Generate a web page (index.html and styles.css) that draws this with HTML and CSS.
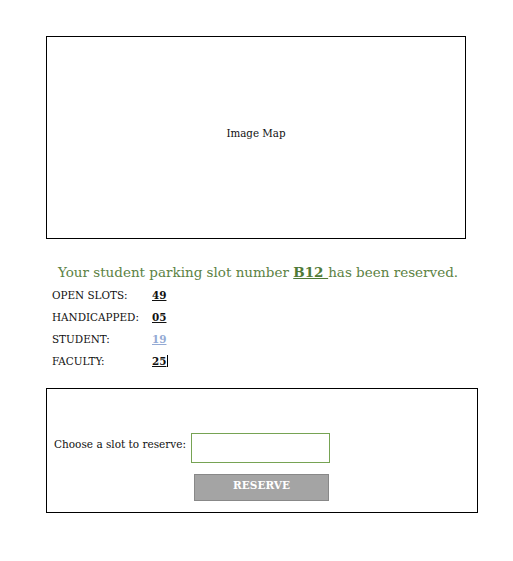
FILE: index.html
```html
<!DOCTYPE html>
<html>
<head>
<meta charset="utf-8">
<link rel="stylesheet" href="styles.css">
</head>
<body>
<div class="page">
  <div class="map">Image Map</div>
  <p class="notice">Your student parking slot number <span class="slot">B12 </span>has been reserved.</p>
  <div class="stats">
    <div class="label">OPEN SLOTS:</div><div class="val">49</div>
    <div class="label">HANDICAPPED:</div><div class="val">05</div>
    <div class="label">STUDENT:</div><div class="val light">19</div>
    <div class="label">FACULTY:</div><div class="val"><span class="cursor">25</span></div>
  </div>
  <div class="form">
    <label class="choose" for="slot">Choose a slot to reserve:</label>
    <input id="slot" class="slotinput" type="text">
    <div></div>
    <button class="reserve" type="button">RESERVE</button>
  </div>
</div>
</body>
</html>
```
FILE: styles.css
```css
html, body {
  margin: 0;
  padding: 0;
  background: #ffffff;
}
body {
  font-family: "DejaVu Serif", "Liberation Serif", serif;
  color: #111;
}
.page {
  padding: 36px 0 0 46px;
}
.map {
  box-sizing: border-box;
  width: 420px;
  height: 203px;
  border: 1px solid #000;
  display: flex;
  align-items: center;
  justify-content: center;
  padding-bottom: 10px;
  font-size: 10.3px;
}
.notice {
  width: 420px;
  margin: 25px 0 0 2px;
  text-align: center;
  font-size: 13.5px;
  line-height: 16px;
  color: #5c8244;
}
.slot {
  font-weight: bold;
  text-decoration: underline;
  color: #4f7a36;
}
.stats {
  display: grid;
  grid-template-columns: 100px auto;
  grid-auto-rows: 22px;
  margin: 7px 0 0 6px;
  font-size: 10.4px;
  line-height: 16px;
}
.val {
  font-weight: bold;
  text-decoration: underline;
}
.val.light {
  color: #94aad4;
}
.cursor {
  border-right: 1px solid #000;
  padding-right: 1px;
}
.form {
  box-sizing: border-box;
  width: 432px;
  height: 125px;
  margin-top: 13px;
  border: 1px solid #000;
  display: grid;
  grid-template-columns: auto auto;
  justify-content: start;
  align-items: start;
  column-gap: 5px;
  row-gap: 11px;
  padding: 44px 0 0 7px;
  align-content: start;
}
.choose {
  font-size: 10.5px;
  line-height: 16px;
  margin-top: 3px;
}
.slotinput {
  box-sizing: border-box;
  width: 139px;
  height: 30px;
  border: 1px solid #76a353;
  margin: 0;
  padding: 0;
  outline: none;
}
.reserve {
  box-sizing: border-box;
  width: 135px;
  height: 27px;
  margin: 0 0 0 3px;
  background: #a4a4a4;
  border: 1px solid #888;
  color: #fff;
  font-family: "DejaVu Serif", "Liberation Serif", serif;
  font-weight: bold;
  font-size: 10.5px;
  padding: 0 0 6px 0;
}
```
